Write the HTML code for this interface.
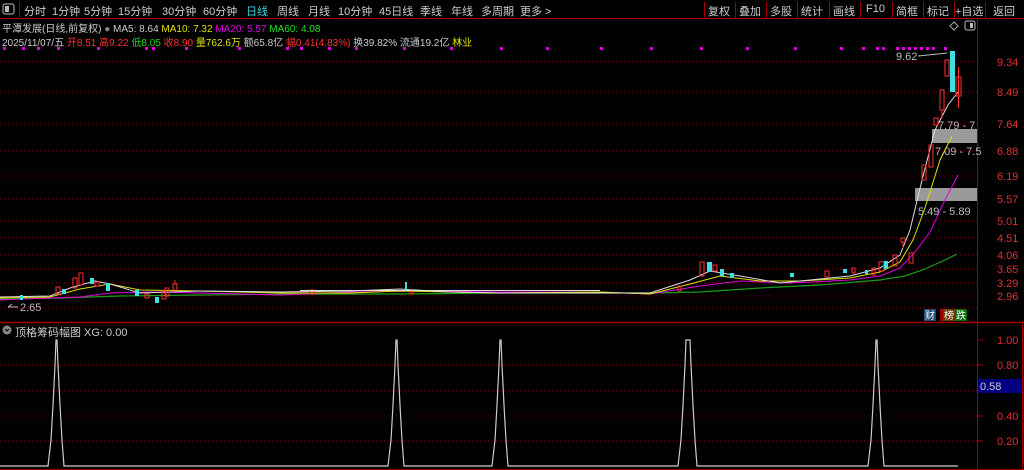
<!DOCTYPE html>
<html><head><meta charset="utf-8"><style>
*{margin:0;padding:0;box-sizing:border-box}
body{width:1024px;height:470px;background:#000;overflow:hidden;position:relative;font-family:"Liberation Sans","Noto Sans CJK SC",sans-serif;font-size:11px;color:#ccc}
.t{position:absolute;white-space:nowrap}
.tb{position:absolute;top:3px;white-space:nowrap;font-size:11px;color:#ccc}
</style></head><body>
<svg width="1024" height="470" style="position:absolute;left:0;top:0" font-family="Liberation Sans, Noto Sans CJK SC, sans-serif">
<line x1="0" y1="18.5" x2="1024" y2="18.5" stroke="#a00000"/>
<line x1="977.5" y1="19" x2="977.5" y2="470" stroke="#a00000"/>
<line x1="0" y1="322.5" x2="1024" y2="322.5" stroke="#a00000" stroke-width="1.5"/>
<line x1="1022.5" y1="322" x2="1022.5" y2="470" stroke="#a00000"/>
<line x1="0" y1="469.5" x2="1024" y2="469.5" stroke="#a00000"/>
<line x1="19.5" y1="2" x2="19.5" y2="17" stroke="#a00000"/>
<g stroke="#a00000"><line x1="704.5" y1="2" x2="704.5" y2="18"/><line x1="735.5" y1="2" x2="735.5" y2="18"/><line x1="766.5" y1="2" x2="766.5" y2="18"/><line x1="797.5" y1="2" x2="797.5" y2="18"/><line x1="829.5" y1="2" x2="829.5" y2="18"/><line x1="860.5" y1="2" x2="860.5" y2="18"/><line x1="892.5" y1="2" x2="892.5" y2="18"/><line x1="923.5" y1="2" x2="923.5" y2="18"/><line x1="954.5" y1="2" x2="954.5" y2="18"/><line x1="985.5" y1="2" x2="985.5" y2="18"/></g>
<rect x="3" y="4" width="11" height="10" rx="2" fill="none" stroke="#bbb"/><rect x="5" y="6" width="4" height="6" fill="#bbb"/>
<g stroke="#800000" stroke-dasharray="1,3">
<line x1="0" y1="62" x2="977" y2="62"/><line x1="0" y1="92" x2="977" y2="92"/><line x1="0" y1="124" x2="977" y2="124"/><line x1="0" y1="151" x2="977" y2="151"/><line x1="0" y1="176" x2="977" y2="176"/><line x1="0" y1="199" x2="977" y2="199"/><line x1="0" y1="221" x2="977" y2="221"/><line x1="0" y1="238" x2="977" y2="238"/><line x1="0" y1="255" x2="977" y2="255"/><line x1="0" y1="269" x2="977" y2="269"/><line x1="0" y1="283" x2="977" y2="283"/><line x1="0" y1="296" x2="977" y2="296"/><line x1="0" y1="308" x2="977" y2="308"/>
<line x1="0" y1="365" x2="977" y2="365"/><line x1="0" y1="391" x2="977" y2="391"/><line x1="0" y1="416" x2="977" y2="416"/><line x1="0" y1="441" x2="977" y2="441"/>
</g>
<g fill="#e03030" font-size="11">
<text x="997" y="66">9.34</text><text x="997" y="96">8.49</text><text x="997" y="128">7.64</text><text x="997" y="155">6.88</text><text x="997" y="180">6.19</text><text x="997" y="203">5.57</text><text x="997" y="225">5.01</text><text x="997" y="242">4.51</text><text x="997" y="259">4.06</text><text x="997" y="273">3.65</text><text x="997" y="287">3.29</text><text x="997" y="300">2.96</text>
<text x="997" y="344">1.00</text><text x="997" y="369">0.80</text><text x="997" y="420">0.40</text><text x="997" y="445">0.20</text>
</g>
<rect x="978" y="379" width="44" height="14" fill="#000080"/><text x="980" y="390" fill="#ccc" font-size="11">0.58</text>
<g fill="#e000e0">
<rect x="3" y="47" width="3" height="3"/><rect x="22" y="47" width="3" height="3"/><rect x="37" y="47" width="3" height="3"/><rect x="57" y="47" width="3" height="3"/><rect x="97" y="47" width="3" height="3"/><rect x="145" y="47" width="3" height="3"/><rect x="152" y="47" width="3" height="3"/><rect x="185" y="47" width="3" height="3"/><rect x="238" y="47" width="3" height="3"/><rect x="286" y="47" width="3" height="3"/><rect x="300" y="47" width="3" height="3"/><rect x="328" y="47" width="3" height="3"/><rect x="355" y="47" width="3" height="3"/><rect x="403" y="47" width="3" height="3"/><rect x="450" y="47" width="3" height="3"/><rect x="500" y="47" width="3" height="3"/><rect x="546" y="47" width="3" height="3"/><rect x="600" y="47" width="3" height="3"/><rect x="650" y="47" width="3" height="3"/><rect x="700" y="47" width="3" height="3"/><rect x="746" y="47" width="3" height="3"/><rect x="794" y="47" width="3" height="3"/><rect x="840" y="47" width="3" height="3"/><rect x="862" y="47" width="3" height="3"/><rect x="876" y="47" width="3" height="3"/><rect x="882" y="47" width="3" height="3"/><rect x="896" y="47" width="3" height="3"/><rect x="902" y="47" width="3" height="3"/><rect x="908" y="47" width="3" height="3"/><rect x="914" y="47" width="3" height="3"/><rect x="920" y="47" width="3" height="3"/><rect x="926" y="47" width="3" height="3"/><rect x="932" y="47" width="3" height="3"/><rect x="944" y="47" width="3" height="3"/>
</g>
<path d="M950 26 L954 22 L958 26 L954 30 Z" fill="none" stroke="#aaa"/>
<rect x="965" y="21" width="10" height="9" rx="2" fill="none" stroke="#bbb"/><rect x="970" y="23" width="3" height="5" fill="#bbb"/>
<rect x="932" y="129" width="45" height="14" fill="#9a9a9a"/>
<rect x="915" y="188" width="62" height="13" fill="#9a9a9a"/>
<g fill="#bbb" font-size="11"><text x="938" y="129">7.79 - 7</text><text x="935" y="155">7.09 - 7.5</text><text x="918" y="215">5.49 - 5.89</text><text x="896" y="60">9.62</text><text x="20" y="311">2.65</text></g>
<path d="M918 56 L947 53" stroke="#bbb"/><path d="M8 307 L18 307 M8 307 L12 304" stroke="#bbb" fill="none"/>
<polyline fill="none" stroke="#1c9c1c" stroke-width="1.2" points="0,299 60,298 120,296 200,295 300,294 400,294 500,293 600,293 650,293 700,292 760,288 820,285 880,280 905,276 925,269 945,260 957,254"/>
<polyline fill="none" stroke="#e000e0" points="0,300 50,298 80,297 110,293 150,292 200,293 280,295 350,292 420,291 500,292 600,292 650,294 700,286 740,281 790,283 850,280 880,276 900,268 915,252 930,232 945,200 958,175"/>
<polyline fill="none" stroke="#e0e000" points="0,298 50,297 80,289 110,284 140,290 200,291 280,293 350,293 400,291 450,292 500,293 600,292 650,294 690,284 720,276 760,281 800,281 850,278 880,272 900,262 913,240 925,208 940,160 952,136"/>
<polyline fill="none" stroke="#ddd" points="0,297 50,296 70,288 95,281 110,284 140,293 200,291 280,292 350,291 400,289 450,292 500,293 600,293 650,293 690,280 710,271 740,276 780,283 850,276 880,268 900,255 910,230 922,180 935,130 948,105 958,92"/>
<g stroke="#ff3030" fill="none">
<rect x="56" y="287" width="4" height="7"/><rect x="73" y="278" width="4" height="10"/><rect x="79" y="273" width="4" height="12"/><rect x="95" y="282" width="4" height="4"/><rect x="165" y="288" width="4" height="8"/><rect x="173" y="284" width="4" height="6"/><line x1="175" y1="280" x2="175" y2="284"/>
<rect x="678" y="286" width="3" height="5"/><rect x="700" y="262" width="4" height="14"/><rect x="713" y="265" width="4" height="6"/><rect x="825" y="271" width="4" height="6"/><rect x="852" y="268" width="3" height="5"/><rect x="872" y="268" width="3" height="7"/><rect x="879" y="262" width="5" height="9"/><rect x="893" y="255" width="4" height="11"/><rect x="901" y="238" width="4" height="4"/><line x1="903" y1="242" x2="903" y2="248"/><rect x="922" y="165" width="4" height="15"/><rect x="929" y="145" width="4" height="22"/><rect x="934" y="118" width="4" height="7"/><rect x="940" y="90" width="4" height="20"/><line x1="942" y1="110" x2="942" y2="118"/><rect x="945" y="60" width="4" height="16"/><rect x="956" y="77" width="5" height="19"/><line x1="958.5" y1="67" x2="958.5" y2="108"/><rect x="909" y="253" width="4" height="10"/>
<rect x="145" y="294" width="4" height="4"/><rect x="162" y="291" width="4" height="8"/><rect x="310" y="290" width="4" height="4"/><rect x="410" y="290" width="3" height="4"/>
</g>
<g fill="#40e0e0">
<rect x="62" y="289" width="4" height="5"/><rect x="90" y="278" width="4" height="6"/><rect x="106" y="283" width="4" height="8"/><rect x="135" y="290" width="4" height="6"/><rect x="155" y="297" width="4" height="6"/><rect x="405" y="282" width="2" height="8"/><rect x="707" y="262" width="5" height="10"/><rect x="720" y="269" width="4" height="7"/><rect x="730" y="273" width="4" height="5"/><rect x="790" y="273" width="4" height="4"/><rect x="843" y="269" width="4" height="4"/><rect x="884" y="261" width="4" height="8"/><rect x="950" y="51" width="5" height="41"/><rect x="20" y="295" width="3" height="5"/><rect x="865" y="270" width="3" height="4"/>
</g>
<g fill="#ddd"><rect x="300" y="290" width="300" height="1"/></g>
<rect x="924" y="309" width="12" height="12" fill="#1e4a7a"/><text x="925" y="319" fill="#fff" font-size="10">财</text>
<rect x="940" y="309" width="3" height="12" fill="#a00000"/><rect x="943" y="309" width="12" height="12" fill="#6a3a00"/><text x="944" y="319" fill="#fff" font-size="10">榜</text><rect x="955" y="309" width="12" height="12" fill="#0a6a0a"/><text x="956" y="319" fill="#fff" font-size="10">跌</text>
<circle cx="7" cy="330" r="4.5" fill="#888"/><path d="M5 329 L7 331 L9 329" stroke="#000" fill="none"/>
<polyline fill="none" stroke="#ccc" stroke-width="1.2" points="0,466 48,466 51,440 53,405 55,365 56,340 57,340 58,365 60,405 62,440 64,466 388,466 391,440 393,405 395,365 396,340 397,340 398,365 400,405 402,440 404,466 492,466 495,440 497,405 499,365 500,340 501,340 502,365 504,405 506,440 508,466 678,466 681,440 683,405 685,365 686,340 690,340 691,365 693,405 695,440 697,466 868,466 871,440 873,405 875,365 876,340 877,340 878,365 880,405 882,440 884,466 958,466"/>
<g stroke="#a00000"><line x1="978" y1="340" x2="983" y2="340"/><line x1="978" y1="365" x2="983" y2="365"/><line x1="978" y1="416" x2="983" y2="416"/><line x1="978" y1="441" x2="983" y2="441"/></g>
</svg>
<div class="tb" style="left:24px">分时</div><div class="tb" style="left:52px">1分钟</div><div class="tb" style="left:84px">5分钟</div><div class="tb" style="left:118px">15分钟</div><div class="tb" style="left:162px">30分钟</div><div class="tb" style="left:203px">60分钟</div><div class="tb" style="left:246px;color:#40d0e0">日线</div><div class="tb" style="left:277px">周线</div><div class="tb" style="left:308px">月线</div><div class="tb" style="left:338px">10分钟</div><div class="tb" style="left:379px">45日线</div><div class="tb" style="left:420px">季线</div><div class="tb" style="left:451px">年线</div><div class="tb" style="left:481px">多周期</div><div class="tb" style="left:520px">更多 &gt;</div>
<div class="tb" style="left:708px">复权</div><div class="tb" style="left:739px">叠加</div><div class="tb" style="left:770px">多股</div><div class="tb" style="left:801px">统计</div><div class="tb" style="left:833px">画线</div><div class="tb" style="left:866px">F10</div><div class="tb" style="left:896px">简框</div><div class="tb" style="left:927px">标记</div><div class="tb" style="left:955px">+自选</div><div class="tb" style="left:993px">返回</div>
<div class="t" style="left:2px;top:20px;font-size:10px">平潭发展(日线,前复权) <span style="color:#888">●</span> MA5: 8.64 <span style="color:#e0e000">MA10: 7.32</span> <span style="color:#e000e0">MA20: 5.57</span> <span style="color:#20e020">MA60: 4.08</span></div>
<div class="t" style="left:2px;top:34px;font-size:10px">2025/11/07/五 <span style="color:#ff3030">开8.51 高9.22</span> <span style="color:#20d020">低8.05</span> <span style="color:#ff3030">收8.90</span> <span style="color:#e0e000">量762.6万</span> 额65.8亿 <span style="color:#ff3030">幅0.41(4.83%)</span> 换39.82% 流通19.2亿 <span style="color:#e0e000">林业</span></div>
<div class="t" style="left:15px;top:324px">顶格筹码幅图 XG: 0.00</div>
</body></html>
